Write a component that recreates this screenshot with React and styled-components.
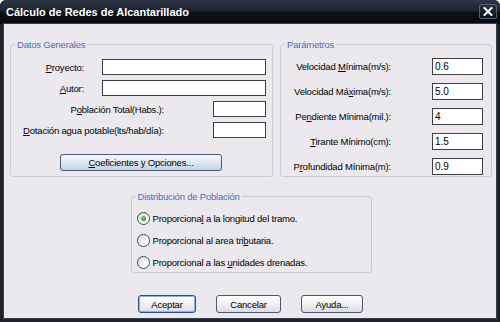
import React from 'react'
import styled, { createGlobalStyle } from 'styled-components'

const GlobalStyle = createGlobalStyle`
  html, body {
    margin: 0;
    padding: 0;
    background: #ffffff;
  }
  body {
    font-family: "Liberation Sans", Arial, sans-serif;
    font-size: 9.5px;
    letter-spacing: -0.2px;
    color: #000;
  }
`

const Window = styled.div`
  width: 500px;
  height: 322px;
  display: flex;
  flex-direction: column;
  background: #1e222b;
  border-radius: 6px 6px 0 0;
  overflow: hidden;
`

const TitleBar = styled.div`
  height: 24px;
  flex: none;
  display: flex;
  align-items: center;
  padding: 0 3px 0 6px;
  background: linear-gradient(#2f3646 0%, #1c2230 46%, #0d1017 52%, #07090e 100%);
  color: #fff;
  font-family: "Liberation Sans", Arial, sans-serif;
  font-weight: bold;
  font-size: 11px;
  letter-spacing: 0;
`

const CloseButton = styled.div`
  margin-left: auto;
  margin-top: -1px;
  width: 18px;
  height: 15px;
  box-sizing: border-box;
  border: 1px solid #56607a;
  border-radius: 2px;
  background: linear-gradient(#283043, #0c1018);
  display: flex;
  align-items: center;
  justify-content: center;
`

const Frame = styled.div`
  flex: 1;
  display: flex;
  padding: 0 4px 4px 4px;
`

const Client = styled.div`
  flex: 1;
  display: flex;
  flex-direction: column;
  background: #ebe9ed;
  padding: 14px 4px 5px 6px;
  box-shadow: 0 0 0 1px #3b404b;
`

const TopRow = styled.div`
  display: flex;
  gap: 7px;
  align-items: stretch;
`

const Group = styled.fieldset`
  margin: 0;
  min-width: 0;
  box-sizing: border-box;
  width: ${p => p.$width}px;
  padding: ${p => p.$pad};
  border: 1px solid #cfcdd4;
  border-radius: 3px;
  display: flex;
  flex-direction: column;
  gap: ${p => p.$gap}px;
  align-self: ${p => (p.$center ? 'center' : 'auto')};
  margin-top: ${p => p.$top || 0}px;
`

const Legend = styled.legend`
  padding: 0 2px;
  margin: 0;
  line-height: 13px;
  color: #4e6db0;
`

const FieldRow = styled.div`
  display: flex;
  justify-content: flex-end;
  align-items: center;
  height: ${p => p.$h}px;
`

const Label = styled.label`
  margin-right: ${p => p.$gap}px;
  white-space: nowrap;
`

const Key = styled.u`
  text-decoration: underline;
`

const TextBox = styled.input`
  box-sizing: border-box;
  width: ${p => p.$w}px;
  height: 100%;
  margin: 0;
  padding: 0 2px;
  border: 1px solid #3e3e44;
  background: #fff;
  font: inherit;
  font-size: 10px;
  letter-spacing: -0.1px;
  color: #000;
  outline: none;
`

const Button = styled.button`
  box-sizing: border-box;
  width: ${p => p.$w}px;
  height: ${p => p.$h || 18}px;
  margin: 0;
  padding: 0;
  font: inherit;
  letter-spacing: inherit;
  color: #000;
  border: 1px solid ${p => (p.$default ? '#2d4c8f' : '#4b5670')};
  border-radius: 3px;
  background: ${p => (p.$blue
    ? 'linear-gradient(#f3f6fb, #dfe7f3 50%, #c3d1e8)'
    : 'linear-gradient(#ffffff, #f1f0f3 50%, #dcdbe2)')};
  box-shadow: ${p => (p.$default ? 'inset 0 0 0 1px #8fb0e6' : 'none')};
`

const WideButton = styled(Button)`
  margin: 11px 0 0 45px;
  align-self: flex-start;
`

const RadioRow = styled.label`
  display: flex;
  align-items: center;
  height: 13px;
  margin-left: 1px;
  gap: 3px;
  white-space: nowrap;
`

const RadioDot = styled.span`
  position: relative;
  width: 13px;
  height: 13px;
  box-sizing: border-box;
  border-radius: 50%;
  border: 1px solid #3b4a63;
  background: linear-gradient(135deg, #d6d5d9, #ffffff 70%);
  flex: none;

  &::after {
    content: '';
    display: ${p => (p.$on ? 'block' : 'none')};
    position: absolute;
    left: 3px;
    top: 3px;
    width: 5px;
    height: 5px;
    border-radius: 50%;
    background: radial-gradient(circle at 40% 35%, #7ee07e, #1f9a1f 70%);
  }
`

const ButtonRow = styled.div`
  display: flex;
  gap: 20px;
  margin-top: 22px;
  padding-left: 128px;
`

const datos = [
  { label: <><Key>P</Key>royecto:</>, w: 164, gap: 18 },
  { label: <><Key>A</Key>utor:</>, w: 164, gap: 18 },
  { label: <>P<Key>o</Key>blación Total(Habs.):</>, w: 53, gap: 49 },
  { label: <><Key>D</Key>otación agua potable(lts/hab/día):</>, w: 53, gap: 49 },
]

const params = [
  { label: <>Velocidad <Key>M</Key>ínima(m/s):</>, value: '0.6' },
  { label: <>Velocidad Má<Key>x</Key>ima(m/s):</>, value: '5.0' },
  { label: <>Pe<Key>n</Key>diente Mínima(mil.):</>, value: '4' },
  { label: <><Key>T</Key>irante Mínimo(cm):</>, value: '1.5' },
  { label: <>P<Key>r</Key>ofundidad Mínima(m):</>, value: '0.9' },
]

const radios = [
  { label: <>Proporciona<Key>l</Key> a la longitud del tramo.</>, on: true },
  { label: <>Proporcional al area tri<Key>b</Key>utaria.</> },
  { label: <>Proporcional a las <Key>u</Key>nidades drenadas.</> },
]

export default function App() {
  return (
    <>
      <GlobalStyle />
      <Window>
        <TitleBar>
          Cálculo de Redes de Alcantarillado
          <CloseButton>
            <svg width="10" height="9" viewBox="0 0 10 9">
              <path d="M1.5 1 L8.5 8 M8.5 1 L1.5 8" stroke="#fff" strokeWidth="2" strokeLinecap="square" />
            </svg>
          </CloseButton>
        </TitleBar>
        <Frame>
          <Client>
            <TopRow>
              <Group $width={263} $pad="8px 6px 5px 4px" $gap={5}>
                <Legend>Datos Generales</Legend>
                {datos.map((d, i) => (
                  <FieldRow key={i} $h={16}>
                    <Label $gap={d.gap}>{d.label}</Label>
                    <TextBox $w={d.w} />
                  </FieldRow>
                ))}
                <WideButton $w={162} $h={17} $blue>
                  <Key>C</Key>oeficientes y Opciones...
                </WideButton>
              </Group>
              <Group $width={212} $pad="7px 8px 0 4px" $gap={8}>
                <Legend>Parámetros</Legend>
                {params.map((p, i) => (
                  <FieldRow key={i} $h={17}>
                    <Label $gap={41}>{p.label}</Label>
                    <TextBox $w={51} defaultValue={p.value} />
                  </FieldRow>
                ))}
              </Group>
            </TopRow>
            <Group $width={241} $pad="9px 4px 3px 4px" $gap={9} $center $top={13}>
              <Legend>Distribución de Población</Legend>
              {radios.map((r, i) => (
                <RadioRow key={i}>
                  <RadioDot $on={r.on} />
                  <span>{r.label}</span>
                </RadioRow>
              ))}
            </Group>
            <ButtonRow>
              <Button $w={58} $default>Aceptar</Button>
              <Button $w={65}>Cancelar</Button>
              <Button $w={62}>Ayuda...</Button>
            </ButtonRow>
          </Client>
        </Frame>
      </Window>
    </>
  )
}
